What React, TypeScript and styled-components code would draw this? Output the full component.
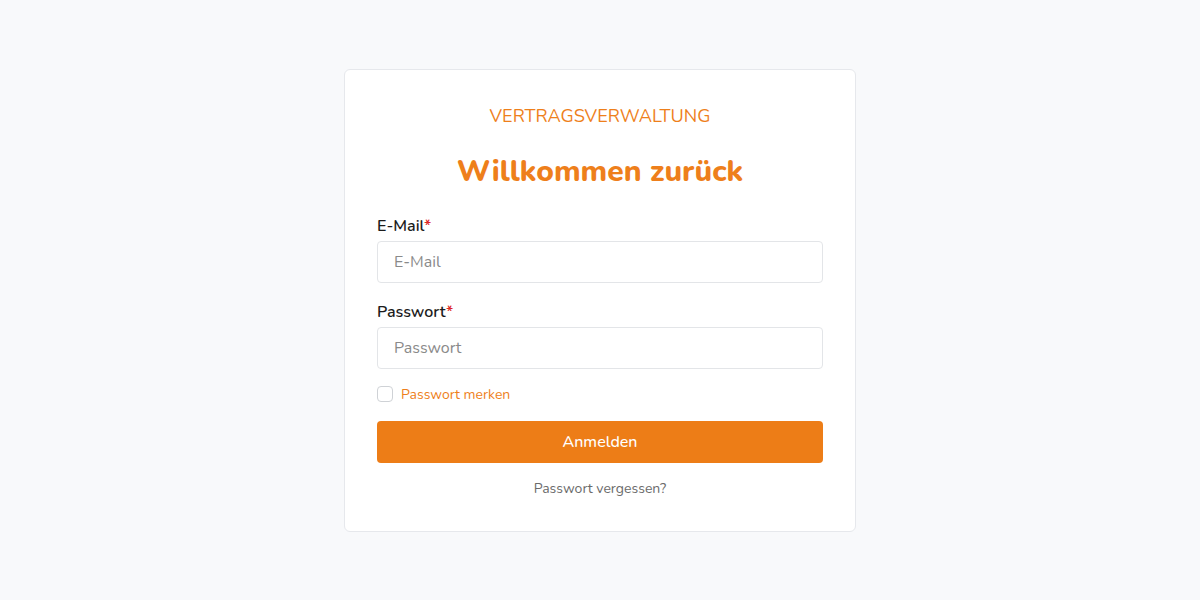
import React from "react";
import styled, { createGlobalStyle } from "styled-components";

const ORANGE = "#ee7f1b";

const GlobalStyle = createGlobalStyle`
  html, body {
    margin: 0;
    padding: 0;
    background: #f8f9fb;
    font-family: "Nunito", "Lato", "Noto Sans", sans-serif;
  }
  * {
    box-sizing: border-box;
  }
`;

const Page = styled.div`
  display: flex;
  justify-content: center;
  align-items: flex-start;
  min-height: 600px;
  padding-top: 69px;
`;

const Card = styled.form`
  width: 512px;
  display: flex;
  flex-direction: column;
  padding: 33px 32px 32px 32px;
  background: #fff;
  border: 1px solid #e6e8ec;
  border-radius: 6px;
`;

const Brand = styled.div`
  text-align: center;
  color: ${ORANGE};
  font-size: 18.2px;
  line-height: 27px;
  font-weight: 400;
`;

const Title = styled.h1`
  margin: 24px 0 24px 0;
  text-align: center;
  color: ${ORANGE};
  font-size: 30px;
  line-height: 36px;
  font-weight: 800;
`;

const Field = styled.div`
  display: flex;
  flex-direction: column;
  gap: 3px;
  margin-bottom: 17px;
`;

const Label = styled.label`
  color: #1c1c1c;
  font-size: 16px;
  line-height: 24px;
  font-weight: 600;
`;

const Required = styled.span`
  color: #dc2626;
`;

const Input = styled.input`
  height: 42px;
  width: 100%;
  padding: 0 16px;
  border: 1px solid #e3e5e8;
  border-radius: 4px;
  font-family: inherit;
  font-size: 16px;
  color: #222;
  outline: none;
  &::placeholder {
    color: #8a8a8a;
  }
`;

const CheckRow = styled.label`
  display: flex;
  align-items: center;
  gap: 8px;
  height: 24px;
  margin: -4px 0 15px 0;
  color: ${ORANGE};
  font-size: 14px;
  cursor: pointer;
`;

const Check = styled.input`
  appearance: none;
  margin: 0;
  width: 16px;
  height: 16px;
  border: 1px solid #cfd2d6;
  border-radius: 4px;
  background: #fff;
`;

const Submit = styled.button`
  height: 42px;
  width: 100%;
  border: none;
  border-radius: 4px;
  background: #ed7d17;
  color: #fff;
  font-family: inherit;
  font-size: 16px;
  font-weight: 500;
  cursor: pointer;
`;

const Forgot = styled.a`
  margin-top: 15px;
  text-align: center;
  color: #6b6b6b;
  font-size: 14px;
  line-height: 21px;
  text-decoration: none;
`;

const App: React.FC = () => {
  return (
    <>
      <GlobalStyle />
      <Page>
        <Card onSubmit={(e) => e.preventDefault()}>
          <Brand>VERTRAGSVERWALTUNG</Brand>
          <Title>Willkommen zurück</Title>
          <Field>
            <Label htmlFor="email">
              E-Mail<Required>*</Required>
            </Label>
            <Input id="email" type="email" placeholder="E-Mail" />
          </Field>
          <Field>
            <Label htmlFor="password">
              Passwort<Required>*</Required>
            </Label>
            <Input id="password" type="password" placeholder="Passwort" />
          </Field>
          <CheckRow>
            <Check type="checkbox" />
            Passwort merken
          </CheckRow>
          <Submit type="submit">Anmelden</Submit>
          <Forgot href="#">Passwort vergessen?</Forgot>
        </Card>
      </Page>
    </>
  );
};

export default App;
